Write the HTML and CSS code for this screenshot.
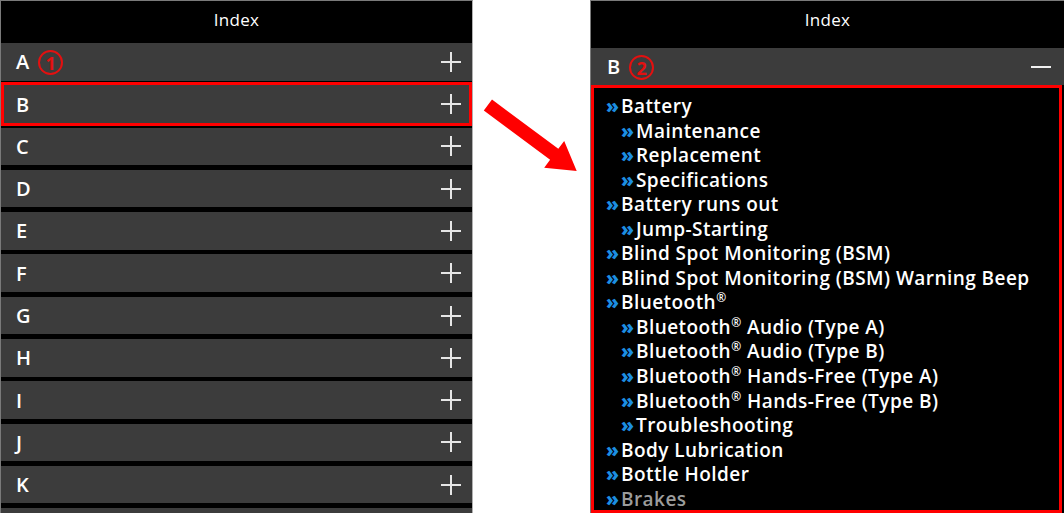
FILE: index.html
```html
<!DOCTYPE html>
<html>
<head>
<meta charset="utf-8">
<link rel="stylesheet" href="styles.css">
</head>
<body>
<div class="page">
  <section class="panel panel-left">
    <header class="panel-head">Index</header>
    <ul class="letters">
      <li class="letter-row"><span class="letter">A<span class="badge">1</span></span><span class="plus"></span></li>
      <li class="letter-row selected"><span class="letter">B</span><span class="plus"></span></li>
      <li class="letter-row"><span class="letter">C</span><span class="plus"></span></li>
      <li class="letter-row"><span class="letter">D</span><span class="plus"></span></li>
      <li class="letter-row"><span class="letter">E</span><span class="plus"></span></li>
      <li class="letter-row"><span class="letter">F</span><span class="plus"></span></li>
      <li class="letter-row"><span class="letter">G</span><span class="plus"></span></li>
      <li class="letter-row"><span class="letter">H</span><span class="plus"></span></li>
      <li class="letter-row"><span class="letter">I</span><span class="plus"></span></li>
      <li class="letter-row"><span class="letter">J</span><span class="plus"></span></li>
      <li class="letter-row"><span class="letter">K</span><span class="plus"></span></li>
      <li class="letter-row"></li>
    </ul>
  </section>

  <div class="gutter">
    <svg class="arrow" width="117" height="200" viewBox="0 0 117 200">
      <polygon points="10.8,110.5 19,99.5 85.3,148.8 91.2,140.9 103.7,171 71.2,167.7 77.1,159.8" fill="#ff0000"/>
    </svg>
  </div>

  <section class="panel panel-right">
    <header class="panel-head panel-head-tall">Index</header>
    <div class="letter-row open"><span class="letter">B<span class="badge">2</span></span><span class="minus"></span></div>
    <div class="entries">
      <ul class="entry-list">
        <li class="entry"><span class="chev">»</span>Battery</li>
        <li class="entry sub"><span class="chev">»</span>Maintenance</li>
        <li class="entry sub"><span class="chev">»</span>Replacement</li>
        <li class="entry sub"><span class="chev">»</span>Specifications</li>
        <li class="entry"><span class="chev">»</span>Battery runs out</li>
        <li class="entry sub"><span class="chev">»</span>Jump-Starting</li>
        <li class="entry"><span class="chev">»</span>Blind Spot Monitoring (BSM)</li>
        <li class="entry"><span class="chev">»</span>Blind Spot Monitoring (BSM) Warning Beep</li>
        <li class="entry"><span class="chev">»</span>Bluetooth<sup>®</sup></li>
        <li class="entry sub"><span class="chev">»</span>Bluetooth<sup>®</sup> Audio (Type A)</li>
        <li class="entry sub"><span class="chev">»</span>Bluetooth<sup>®</sup> Audio (Type B)</li>
        <li class="entry sub"><span class="chev">»</span>Bluetooth<sup>®</sup> Hands-Free (Type A)</li>
        <li class="entry sub"><span class="chev">»</span>Bluetooth<sup>®</sup> Hands-Free (Type B)</li>
        <li class="entry sub"><span class="chev">»</span>Troubleshooting</li>
        <li class="entry"><span class="chev">»</span>Body Lubrication</li>
        <li class="entry"><span class="chev">»</span>Bottle Holder</li>
        <li class="entry faded"><span class="chev">»</span>Brakes</li>
      </ul>
    </div>
  </section>
</div>
</body>
</html>
```

FILE: styles.css
```css
* { box-sizing: border-box; }

html, body {
  margin: 0;
  padding: 0;
  background: #ffffff;
}

body {
  width: 1064px;
  height: 513px;
  overflow: hidden;
  font-family: "Open Sans", "Liberation Sans", sans-serif;
}

.page {
  display: flex;
  height: 513px;
}

.panel {
  background: #000;
  display: flex;
  flex-direction: column;
  height: 513px;
  overflow: hidden;
  border-top: 1px solid #7a7a7a;
  border-left: 1px solid #7a7a7a;
}

.panel-left {
  width: 473px;
  border-right: 1px solid #b0b0b0;
}

.panel-right {
  width: 474px;
}

.gutter {
  width: 117px;
  flex: none;
}

.arrow { display: block; }

.panel-head {
  height: 42px;
  flex: none;
  color: #fff;
  font-size: 17px;
  letter-spacing: 0.3px;
  display: flex;
  justify-content: center;
  align-items: flex-start;
  padding-top: 7px;
  line-height: 24px;
}

.panel-head-tall {
  height: 47px;
}

.letters {
  list-style: none;
  margin: 0;
  padding: 0;
}

.letter-row {
  height: 37.5px;
  margin-bottom: 4.8px;
  background: #3c3c3c;
  display: flex;
  align-items: center;
  justify-content: space-between;
  padding: 0 11px 0 15px;
  position: relative;
}

.letter-row.selected::after {
  content: "";
  position: absolute;
  left: 0;
  right: 0;
  top: -3px;
  bottom: -3px;
  border: 3px solid #ff0000;
}

.letter-row.open {
  height: 37px;
  margin: 0;
  flex: none;
  padding: 0 13px 0 16px;
}

.letter {
  color: #fff;
  font-size: 20px;
  font-weight: 600;
  display: flex;
  align-items: center;
}

.badge {
  width: 25px;
  height: 25px;
  border: 2px solid #e41010;
  border-radius: 50%;
  color: #e41010;
  font-size: 18px;
  font-weight: 700;
  display: inline-flex;
  align-items: center;
  justify-content: center;
  margin-left: 9px;
  line-height: 1;
  margin-top: 2px;
}

.plus {
  width: 20px;
  height: 20px;
  position: relative;
}

.plus::before,
.plus::after {
  content: "";
  position: absolute;
  background: #e6e6e6;
}

.plus::before {
  left: 0;
  right: 0;
  top: 9px;
  height: 2px;
}

.plus::after {
  top: 0;
  bottom: 0;
  left: 9px;
  width: 2px;
}

.minus {
  width: 20px;
  height: 2px;
  background: #f0f0f0;
}

.entries {
  flex: 1;
  border: 3px solid #ff0000;
  margin-right: 2px;
  overflow: hidden;
}

.entry-list {
  list-style: none;
  margin: 0;
  padding: 6px 0 0 12px;
}

.entry {
  color: #fff;
  font-size: 19px;
  font-weight: 600;
  letter-spacing: 0.45px;
  line-height: 24.56px;
  height: 24.56px;
  white-space: nowrap;
}

.entry.sub {
  padding-left: 15px;
}

.entry.faded {
  color: #9c9c9c;
}

.chev {
  color: #1c8ee2;
  font-weight: 800;
  letter-spacing: 0;
  margin-right: 2px;
}

sup {
  font-size: 12px;
  line-height: 0;
  vertical-align: 7px;
}
```
